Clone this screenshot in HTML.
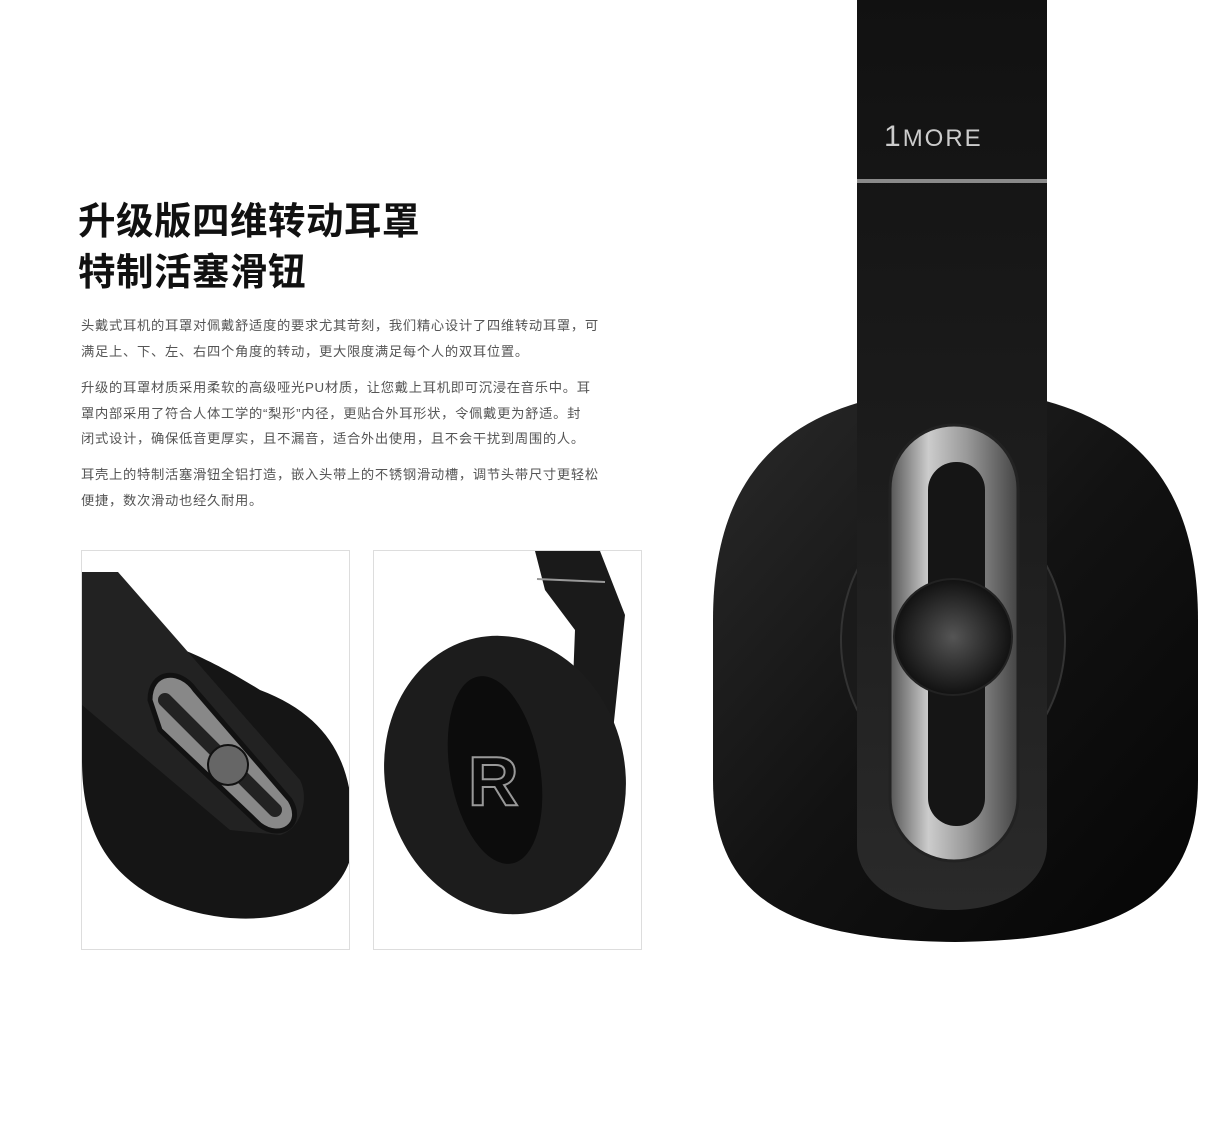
<!DOCTYPE html>
<html><head><meta charset="utf-8"><style>
html,body{margin:0;padding:0;background:#fff;width:1226px;height:1124px;overflow:hidden;position:relative;font-family:"Liberation Sans","Noto Sans CJK SC",sans-serif}
.t{position:absolute;left:78px;top:196px;font-size:37.5px;font-weight:bold;color:#111;line-height:51px;letter-spacing:0.5px}
.p{position:absolute;left:81px;width:560px;font-size:13.3px;color:#555;line-height:25.5px;letter-spacing:0.7px}
svg{position:absolute;left:0;top:0}
</style></head><body>
<svg width="1226" height="1124" viewBox="0 0 1226 1124">
<defs>
<linearGradient id="cup" x1="0" y1="0" x2="1" y2="1"><stop offset="0" stop-color="#2a2a2a"/><stop offset="0.5" stop-color="#121212"/><stop offset="1" stop-color="#050505"/></linearGradient>
<linearGradient id="band" x1="0" y1="0" x2="0" y2="1"><stop offset="0" stop-color="#111"/><stop offset="0.6" stop-color="#1e1e1e"/><stop offset="1" stop-color="#2a2a2a"/></linearGradient>
<linearGradient id="met" x1="0" y1="0" x2="1" y2="0"><stop offset="0" stop-color="#555"/><stop offset="0.3" stop-color="#ccc"/><stop offset="0.6" stop-color="#999"/><stop offset="1" stop-color="#444"/></linearGradient>
<radialGradient id="knob" cx="0.5" cy="0.5" r="0.5"><stop offset="0" stop-color="#555"/><stop offset="1" stop-color="#111"/></radialGradient>
</defs>
<path d="M713 620 C713 470 790 395 955 388 C1120 395 1198 470 1198 620 L1198 780 C1198 900 1120 940 955 942 C790 940 713 900 713 780 Z" fill="url(#cup)"/>
<ellipse cx="953" cy="640" rx="112" ry="135" fill="#1a1a1a" stroke="#333" stroke-width="2"/>
<path d="M857 0 H1047 V845 C1047 880 1010 910 952 910 C894 910 857 880 857 845 Z" fill="url(#band)"/>
<rect x="857" y="179" width="190" height="4" fill="#8a8a8a"/>
<text x="884" y="146" font-family="Liberation Sans,sans-serif" font-size="30" fill="#ccc" letter-spacing="2">1<tspan font-size="24">MORE</tspan></text>
<rect x="890" y="425" width="128" height="436" rx="64" fill="url(#met)" stroke="#222" stroke-width="3"/>
<rect x="928" y="462" width="57" height="364" rx="28" fill="#151515"/>
<ellipse cx="953" cy="637" rx="59" ry="58" fill="url(#knob)" stroke="#222" stroke-width="2"/>
<rect x="81.5" y="550.5" width="268" height="399" fill="#fff" stroke="#ddd"/>
<clipPath id="c1"><rect x="82" y="551" width="267" height="398"/></clipPath>
<g clip-path="url(#c1)">
<path d="M82 700 C85 600 180 640 260 690 C340 720 360 780 350 860 C330 920 240 935 160 900 C100 870 82 820 82 760 Z" fill="#151515"/>
<path d="M82 572 H118 L300 780 C310 800 300 830 280 835 L230 830 L82 705 Z" fill="#222"/>
<path d="M150 700 C150 670 180 668 195 690 L290 800 C305 825 280 840 260 825 L160 730 Z" fill="#888" stroke="#111" stroke-width="5"/>
<path d="M165 700 L275 810" stroke="#222" stroke-width="14" stroke-linecap="round"/>
<circle cx="228" cy="765" r="20" fill="#666" stroke="#111" stroke-width="2"/>
</g>
<rect x="373.5" y="550.5" width="268" height="399" fill="#fff" stroke="#ddd"/>
<clipPath id="c2"><rect x="374" y="551" width="267" height="398"/></clipPath>
<g clip-path="url(#c2)">
<path d="M535 551 H600 L625 615 L610 760 L570 760 L575 630 L545 590 Z" fill="#1a1a1a"/>
<line x1="537" y1="579" x2="605" y2="582" stroke="#999" stroke-width="2"/>
<ellipse cx="505" cy="775" rx="120" ry="140" transform="rotate(-12 505 775)" fill="#1c1c1c"/>
<ellipse cx="495" cy="770" rx="45" ry="95" transform="rotate(-10 495 770)" fill="#0c0c0c"/>
<text x="468" y="805" font-family="Liberation Sans,sans-serif" font-weight="bold" font-size="70" fill="none" stroke="#999" stroke-width="2">R</text>
</g>
</svg>
<div class="t">升级版四维转动耳罩<br>特制活塞滑钮</div>
<div class="p" style="top:313px">头戴式耳机的耳罩对佩戴舒适度的要求尤其苛刻，我们精心设计了四维转动耳罩，可<br>满足上、下、左、右四个角度的转动，更大限度满足每个人的双耳位置。</div>
<div class="p" style="top:375px">升级的耳罩材质采用柔软的高级哑光PU材质，让您戴上耳机即可沉浸在音乐中。耳<br>罩内部采用了符合人体工学的“梨形”内径，更贴合外耳形状，令佩戴更为舒适。封<br>闭式设计，确保低音更厚实，且不漏音，适合外出使用，且不会干扰到周围的人。</div>
<div class="p" style="top:462px">耳壳上的特制活塞滑钮全铝打造，嵌入头带上的不锈钢滑动槽，调节头带尺寸更轻松<br>便捷，数次滑动也经久耐用。</div>
</body></html>
